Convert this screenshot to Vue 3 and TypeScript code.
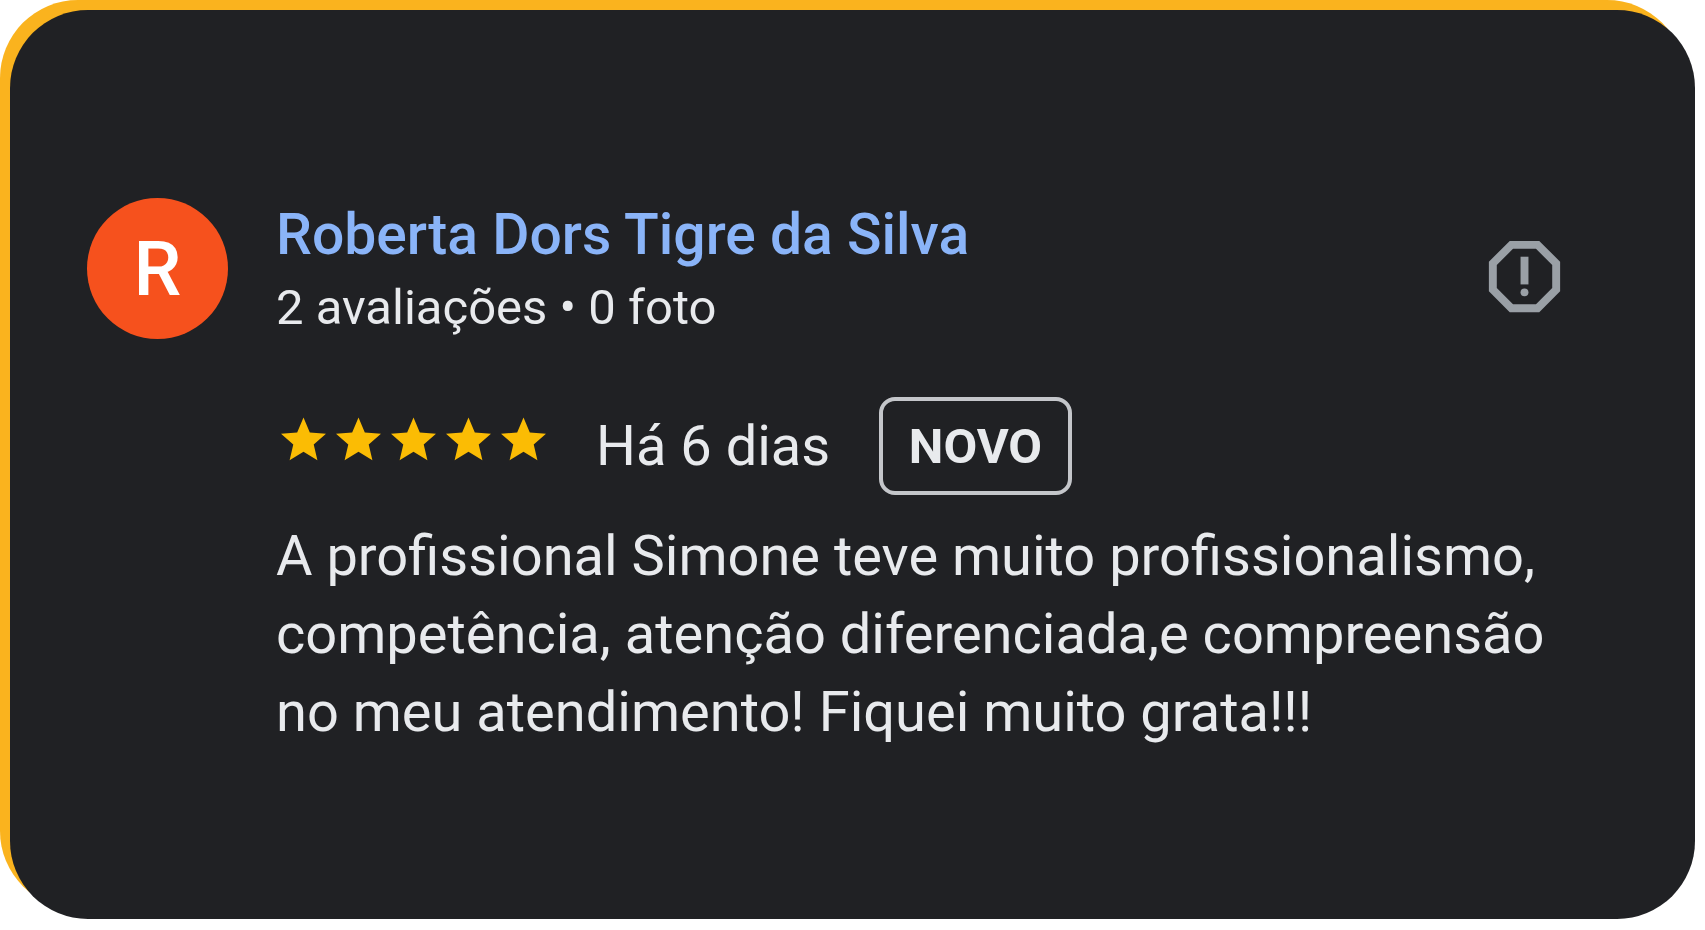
<script setup lang="ts">
interface Review {
  author: string
  initial: string
  stats: string
  rating: number
  date: string
  badge: string
  text: string
}

const review: Review = {
  author: 'Roberta Dors Tigre da Silva',
  initial: 'R',
  stats: '2 avaliações • 0 foto',
  rating: 5,
  date: 'Há 6 dias',
  badge: 'NOVO',
  text: [
    'A profissional Simone teve muito profissionalismo,',
    'competência, atenção diferenciada,e compreensão',
    'no meu atendimento! Fiquei muito grata!!!',
  ].join('\n'),
}
</script>

<template>
  <main class="page">
    <article class="card">
      <div class="avatar" aria-hidden="true">{{ review.initial }}</div>

      <header class="header">
        <div class="author">
          <a class="name" href="#">{{ review.author }}</a>
          <p class="stats">{{ review.stats }}</p>
        </div>
        <button class="report" type="button" aria-label="Denunciar avaliação">
          <svg viewBox="0 0 24 24" aria-hidden="true">
            <path
              fill-rule="evenodd"
              d="M15.73 3H8.27L3 8.27v7.46L8.27 21h7.46L21 15.73V8.27L15.73 3zM19 14.9L14.9 19H9.1L5 14.9V9.1L9.1 5h5.8L19 9.1v5.8z"
            />
            <path d="M11 7h2v7h-2z" />
            <circle cx="12" cy="16" r="1" />
          </svg>
        </button>
      </header>

      <div class="body">
        <div class="meta">
          <div class="stars" role="img" :aria-label="`${review.rating} de 5 estrelas`">
            <svg v-for="n in review.rating" :key="n" class="star" viewBox="0 0 24 24">
              <path
                d="M12 17.27L18.18 21l-1.64-7.03L22 9.24l-7.19-.61L12 2 9.19 8.63 2 9.24l5.46 4.73L5.82 21z"
              />
            </svg>
          </div>
          <span class="date">{{ review.date }}</span>
          <span class="badge">{{ review.badge }}</span>
        </div>
        <p class="text">{{ review.text }}</p>
      </div>
    </article>
  </main>
</template>

<style>
body {
  margin: 0;
  background: #fff;
}
</style>

<style scoped>
.page {
  box-sizing: border-box;
  min-height: 100vh;
  padding: 10px 10px 11px;
  display: grid;
  font-family: Roboto, 'Liberation Sans', sans-serif;
  font-size: 56px;
  line-height: 66px;
  color: #e8eaed;
}

.card {
  box-sizing: border-box;
  display: grid;
  grid-template-columns: 141px 1fr;
  align-content: start;
  column-gap: 48px;
  row-gap: 58px;
  padding: 188px 123px 80px 77px;
  border-radius: 78px;
  background: #202124;
  box-shadow: -10px -10px 0 #fab31e;
}

.avatar {
  width: 141px;
  height: 141px;
  border-radius: 50%;
  background: #f6511d;
  color: #fff;
  font-size: 76px;
  font-weight: 500;
  line-height: 142px;
  text-align: center;
}

.header {
  display: flex;
  justify-content: space-between;
  align-items: center;
  height: 141px;
}

.author {
  display: flex;
  flex-direction: column;
  gap: 12px;
}

.name {
  color: #8ab4f8;
  font-size: 57px;
  font-weight: 500;
  text-decoration: none;
}

.stats {
  margin: 0;
  font-size: 49px;
  line-height: 56px;
}

.report {
  flex: none;
  width: 95px;
  height: 95px;
  margin-top: 16px;
  padding: 0;
  border: 0;
  background: none;
  cursor: pointer;
}

.report svg {
  display: block;
  width: 100%;
  fill: #9aa0a6;
}

.body {
  grid-column: 2;
  display: grid;
  gap: 22px;
}

.meta {
  display: grid;
  grid-template-columns: 275px 238px auto;
  justify-content: start;
  align-items: center;
  gap: 45px;
}

.stars {
  display: flex;
  padding-bottom: 12px;
}

.star {
  width: 55px;
  height: 54px;
  fill: #fbbc04;
}

.date {
  white-space: nowrap;
}

.badge {
  box-sizing: border-box;
  min-width: 193px;
  padding: 18px 20px 16px;
  border: 4px solid #c4c6ca;
  border-radius: 16px;
  font-size: 49px;
  line-height: 56px;
  font-weight: 700;
  text-align: center;
}

.text {
  margin: 0;
  line-height: 78px;
  white-space: pre-line;
}
</style>
